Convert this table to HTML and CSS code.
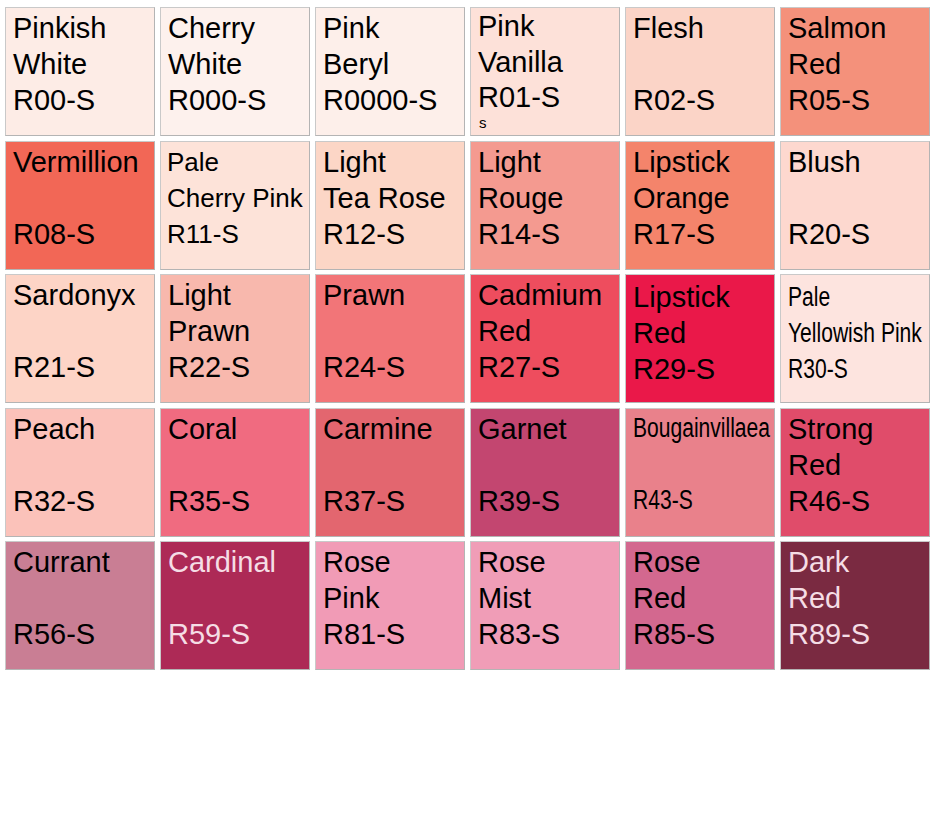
FILE: index.html
```html
<!DOCTYPE html>
<html>
<head>
<meta charset="utf-8">
<link rel="stylesheet" href="styles.css">
</head>
<body>
<div class="chart">
  <div class="cell c-r00"><span class="ln">Pinkish</span><span class="ln">White</span><span class="ln">R00-S</span></div>
  <div class="cell c-r000"><span class="ln">Cherry</span><span class="ln">White</span><span class="ln">R000-S</span></div>
  <div class="cell c-r0000"><span class="ln">Pink</span><span class="ln">Beryl</span><span class="ln">R0000-S</span></div>
  <div class="cell c-r01 up"><span class="ln">Pink</span><span class="ln">Vanilla</span><span class="ln">R01-S</span><span class="ln tiny">s</span></div>
  <div class="cell c-r02"><span class="ln">Flesh</span><span class="ln"></span><span class="ln">R02-S</span></div>
  <div class="cell c-r05"><span class="ln">Salmon</span><span class="ln">Red</span><span class="ln">R05-S</span></div>

  <div class="cell c-r08"><span class="ln">Vermillion</span><span class="ln"></span><span class="ln">R08-S</span></div>
  <div class="cell c-r11 small"><span class="ln">Pale</span><span class="ln">Cherry Pink</span><span class="ln">R11-S</span></div>
  <div class="cell c-r12"><span class="ln">Light</span><span class="ln">Tea Rose</span><span class="ln">R12-S</span></div>
  <div class="cell c-r14"><span class="ln">Light</span><span class="ln">Rouge</span><span class="ln">R14-S</span></div>
  <div class="cell c-r17"><span class="ln">Lipstick</span><span class="ln">Orange</span><span class="ln">R17-S</span></div>
  <div class="cell c-r20"><span class="ln">Blush</span><span class="ln"></span><span class="ln">R20-S</span></div>

  <div class="cell c-r21"><span class="ln">Sardonyx</span><span class="ln"></span><span class="ln">R21-S</span></div>
  <div class="cell c-r22"><span class="ln">Light</span><span class="ln">Prawn</span><span class="ln">R22-S</span></div>
  <div class="cell c-r24"><span class="ln">Prawn</span><span class="ln"></span><span class="ln">R24-S</span></div>
  <div class="cell c-r27"><span class="ln">Cadmium</span><span class="ln">Red</span><span class="ln">R27-S</span></div>
  <div class="cell c-r29 down"><span class="ln">Lipstick</span><span class="ln">Red</span><span class="ln">R29-S</span></div>
  <div class="cell c-r30 narrow down"><span class="ln">Pale</span><span class="ln">Yellowish Pink</span><span class="ln">R30-S</span></div>

  <div class="cell c-r32"><span class="ln">Peach</span><span class="ln"></span><span class="ln">R32-S</span></div>
  <div class="cell c-r35"><span class="ln">Coral</span><span class="ln"></span><span class="ln">R35-S</span></div>
  <div class="cell c-r37"><span class="ln">Carmine</span><span class="ln"></span><span class="ln">R37-S</span></div>
  <div class="cell c-r39"><span class="ln">Garnet</span><span class="ln"></span><span class="ln">R39-S</span></div>
  <div class="cell c-r43 narrow"><span class="ln">Bougainvillaea</span><span class="ln"></span><span class="ln">R43-S</span></div>
  <div class="cell c-r46"><span class="ln">Strong</span><span class="ln">Red</span><span class="ln">R46-S</span></div>

  <div class="cell c-r56"><span class="ln">Currant</span><span class="ln"></span><span class="ln">R56-S</span></div>
  <div class="cell c-r59 light"><span class="ln">Cardinal</span><span class="ln"></span><span class="ln">R59-S</span></div>
  <div class="cell c-r81"><span class="ln">Rose</span><span class="ln">Pink</span><span class="ln">R81-S</span></div>
  <div class="cell c-r83"><span class="ln">Rose</span><span class="ln">Mist</span><span class="ln">R83-S</span></div>
  <div class="cell c-r85"><span class="ln">Rose</span><span class="ln">Red</span><span class="ln">R85-S</span></div>
  <div class="cell c-r89 light"><span class="ln">Dark</span><span class="ln">Red</span><span class="ln">R89-S</span></div>
</div>
</body>
</html>
```
FILE: styles.css
```css
html, body {
  margin: 0;
  padding: 0;
  background: #ffffff;
}

body {
  width: 935px;
  height: 818px;
  overflow: hidden;
  font-family: "Liberation Sans", Arial, sans-serif;
}

.chart {
  display: grid;
  grid-template-columns: repeat(6, 150px);
  grid-auto-rows: 129px;
  column-gap: 5px;
  row-gap: 4.5px;
  padding: 7px 0 0 5px;
}

.cell {
  box-sizing: border-box;
  display: flex;
  flex-direction: column;
  align-items: flex-start;
  padding: 2px 4px 0 7px;
  border: 1px solid #c9c9c9;
  border-right-color: #b4b4b4;
  border-bottom-color: #b4b4b4;
  color: #000000;
  font-size: 29px;
  line-height: 36px;
  overflow: hidden;
  white-space: nowrap;
}

.ln {
  display: block;
  height: 36px;
}

.up {
  padding-top: 0;
}

.up .ln {
  height: 35.5px;
}

.down {
  padding-top: 4px;
}

.tiny {
  font-size: 15px;
  line-height: 16px;
  height: 16px;
  padding-left: 1px;
}

.small {
  font-size: 26px;
  padding-left: 6px;
}

.narrow {
  font-size: 27px;
}

.narrow .ln {
  transform: scaleX(0.78);
  transform-origin: left center;
}

.c-r43 {
  padding-top: 1px;
}

.light {
  color: #f5dde5;
}

.c-r00 { background: #fdece6; }
.c-r000 { background: #fdf1ed; }
.c-r0000 { background: #fdefea; }
.c-r01 { background: #fde1d9; }
.c-r02 { background: #fbd4c7; }
.c-r05 { background: #f4917b; }

.c-r08 { background: #f26756; }
.c-r11 { background: #fde3d9; }
.c-r12 { background: #fcd6c6; }
.c-r14 { background: #f49a90; }
.c-r17 { background: #f4846b; }
.c-r20 { background: #fdd8cf; }

.c-r21 { background: #fdd4c6; }
.c-r22 { background: #f8b8ad; }
.c-r24 { background: #f27578; }
.c-r27 { background: #ee4d5e; }
.c-r29 { background: #ea1849; }
.c-r30 { background: #fde4df; }

.c-r32 { background: #fbc2ba; }
.c-r35 { background: #f06b80; }
.c-r37 { background: #e3666f; }
.c-r39 { background: #c34670; }
.c-r43 { background: #e9818b; }
.c-r46 { background: #e04c6a; }

.c-r56 { background: #c97e94; }
.c-r59 { background: #ad2a56; }
.c-r81 { background: #f19bb6; }
.c-r83 { background: #f09db7; }
.c-r85 { background: #d3688f; }
.c-r89 { background: #7a2a41; }
```
